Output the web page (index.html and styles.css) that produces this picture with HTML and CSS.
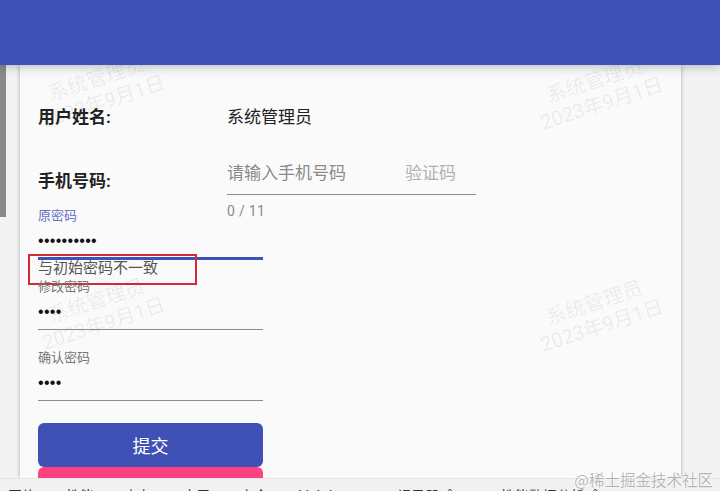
FILE: index.html
```html
<!DOCTYPE html>
<html lang="zh-CN">
<head>
  <meta charset="UTF-8" />
  <meta name="viewport" content="width=device-width, initial-scale=1" />
  <title>修改密码</title>
  <link rel="stylesheet" href="styles.css">
</head>
<body>
  <header class="topbar"></header>

  <div class="main">
    <div class="side"><div class="side-thumb"></div></div>

    <div class="card">
      <div class="row row-name">
        <div class="row-label">用户姓名:</div>
        <div class="row-value">系统管理员</div>
      </div>

      <div class="row row-phone">
        <div class="row-label">手机号码:</div>
        <div class="phone-field">
          <div class="phone-input">
            <span class="placeholder">请输入手机号码</span>
            <span class="placeholder code">验证码</span>
          </div>
          <div class="hint">0 / 11</div>
        </div>
      </div>

      <div class="pwd-form">
        <div class="field focused">
          <label>原密码</label>
          <div class="field-input">••••••••••</div>
          <div class="field-error">与初始密码不一致</div>
          <div class="mark-box"></div>
        </div>
        <div class="field">
          <label>修改密码</label>
          <div class="field-input">••••</div>
        </div>
        <div class="field">
          <label>确认密码</label>
          <div class="field-input">••••</div>
        </div>
        <button class="btn btn-primary">提交</button>
        <button class="btn btn-accent"></button>
      </div>
    </div>
  </div>

  <div class="devtools">
    <span>网络</span>
    <span>性能</span>
    <span>内存</span>
    <span>应用</span>
    <span>安全</span>
    <span>Lighthouse</span>
    <span class="warn">记录器 ⚠</span>
    <span>性能数据分析 ⚠</span>
  </div>

  <div class="watermark wm-1">系统管理员<br>2023年9月1日</div>
  <div class="watermark wm-2">系统管理员<br>2023年9月1日</div>
  <div class="watermark wm-3">系统管理员<br>2023年9月1日</div>
  <div class="watermark wm-4">系统管理员<br>2023年9月1日</div>

  <div class="site-mark">@稀土掘金技术社区</div>
</body>
</html>
```

FILE: styles.css
```css
* {
  box-sizing: border-box;
}
body {
  margin: 0;
  height: 491px;
  overflow: hidden;
  position: relative;
  background: #f3f3f3;
  font-family: Roboto, "Noto Sans CJK SC", sans-serif;
  color: #212121;
}
.topbar {
  height: 65px;
  background: #3f51b5;
  position: relative;
  z-index: 2;
  box-shadow: 0 2px 10px rgba(0, 0, 0, 0.25);
}
.main {
  display: flex;
  height: 413px;
}
.side {
  width: 20px;
  flex-shrink: 0;
}
.side-thumb {
  width: 6px;
  height: 152px;
  background: #8a8a8a;
}
.card {
  width: 661px;
  background: #fafafa;
  box-shadow: 0 0 4px rgba(0, 0, 0, 0.3);
  padding: 40px 0 0 18px;
  overflow: hidden;
}
.row {
  display: flex;
}
.row-label {
  width: 189px;
  font-size: 17px;
  font-weight: bold;
  line-height: 24px;
}
.row-value {
  font-size: 17px;
  line-height: 24px;
}
.row-phone {
  margin-top: 31px;
  height: 48px;
}
.row-phone .row-label {
  padding-top: 9px;
}
.phone-field {
  width: 249px;
}
.phone-input {
  display: flex;
  justify-content: space-between;
  font-size: 17px;
  line-height: 26px;
  padding-bottom: 8px;
  border-bottom: 1px solid #8c8c8c;
}
.placeholder {
  color: #8a8a8a;
}
.placeholder.code {
  color: #b0b0b0;
  margin-right: 20px;
}
.hint {
  margin-top: 7px;
  font-size: 14px;
  line-height: 18px;
  letter-spacing: 0.3px;
  color: #8a8a8a;
}
.pwd-form {
  width: 225px;
  display: flex;
  flex-direction: column;
}
.field {
  position: relative;
  margin-bottom: 20px;
  border-bottom: 1px solid #8c8c8c;
}
.field.focused {
  border-bottom: 3px solid #3f51b5;
  margin-bottom: 19px;
}
.field label {
  display: block;
  font-size: 13px;
  line-height: 16px;
  color: #777;
}
.field.focused label {
  color: #6673c6;
}
.field-input {
  margin-top: 6px;
  padding-bottom: 6px;
  font-family: "Liberation Sans", sans-serif;
  font-size: 16px;
  line-height: 22px;
  letter-spacing: 0.3px;
  color: #111;
}
.field.focused .field-input {
  padding-bottom: 5px;
}
.field-error {
  position: absolute;
  top: 100%;
  left: 0;
  margin-top: 1px;
  font-size: 15px;
  line-height: 20px;
  color: #555;
  white-space: nowrap;
}
.mark-box {
  position: absolute;
  left: -10px;
  top: 46px;
  width: 169px;
  height: 31px;
  border: 2px solid #d12b36;
}
.btn {
  height: 44px;
  border: none;
  border-radius: 6px;
  font-family: inherit;
  font-size: 18px;
  color: #fff;
  flex-shrink: 0;
}
.btn-primary {
  margin-top: 2px;
  background: #3f51b5;
}
.btn-accent {
  background: #ff4081;
}
.devtools {
  position: relative;
  z-index: 3;
  height: 13px;
  overflow: hidden;
  background: #f1f1f1;
  border-top: 1px solid #e6e6e6;
  display: flex;
  gap: 30px;
  padding: 8px 0 0 8px;
  font-size: 14px;
  line-height: 18px;
  color: #333;
}
.devtools .warn {
  margin-right: 14px;
}
.watermark {
  position: absolute;
  width: 140px;
  text-align: center;
  font-size: 20px;
  line-height: 24px;
  color: rgba(0, 0, 0, 0.07);
  transform: rotate(-18deg);
  pointer-events: none;
  z-index: 1;
}
.wm-1 { left: 30px; top: 66px; }
.wm-2 { left: 528px; top: 68px; }
.wm-3 { left: 30px; top: 288px; }
.wm-4 { left: 528px; top: 290px; }
.site-mark {
  position: absolute;
  right: 7px;
  bottom: 2px;
  z-index: 4;
  font-family: "Noto Sans CJK SC", sans-serif;
  font-size: 15.5px;
  line-height: 19px;
  color: rgba(0, 0, 0, 0.28);
  text-shadow: 0 0 2px #fff;
}
```
